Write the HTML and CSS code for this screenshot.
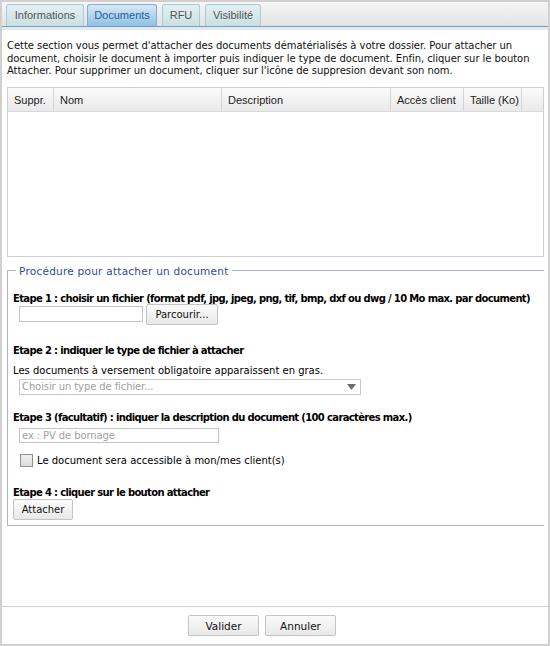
FILE: index.html
```html
<!DOCTYPE html>
<html lang="fr">
<head>
<meta charset="utf-8">
<link rel="stylesheet" href="styles.css">
</head>
<body>
<div class="window">
  <div class="tabbar">
    <div class="tab t-info">Informations</div>
    <div class="tab t-docs active">Documents</div>
    <div class="tab t-rfu">RFU</div>
    <div class="tab t-vis">Visibilité</div>
  </div>
  <div class="content">
    <p class="intro">Cette section vous permet d'attacher des documents dématérialisés à votre dossier. Pour attacher un document, choisir le document à importer puis indiquer le type de document. Enfin, cliquer sur le bouton Attacher. Pour supprimer un document, cliquer sur l'icône de suppresion devant son nom.</p>
    <div class="grid">
      <div class="grid-head">
        <div class="col c1">Suppr.</div>
        <div class="col c2">Nom</div>
        <div class="col c3">Description</div>
        <div class="col c4">Accès client</div>
        <div class="col c5">Taille (Ko)</div>
        <div class="col c6"></div>
      </div>
      <div class="grid-body"></div>
    </div>
    <fieldset class="proc">
      <legend>Procédure pour attacher un document</legend>
      <div class="step s1">Etape 1 : choisir un fichier (format pdf, jpg, jpeg, png, tif, bmp, dxf ou dwg / 10 Mo max. par document)</div>
      <div class="row file-row">
        <span class="field file-field"></span>
        <span class="btn browse">Parcourir...</span>
      </div>
      <div class="step s2">Etape 2 : indiquer le type de fichier à attacher</div>
      <div class="note">Les documents à versement obligatoire apparaissent en gras.</div>
      <div class="select">
        <span class="ph">Choisir un type de fichier...</span>
        <span class="arrow"><svg width="9" height="6" viewBox="0 0 9 6"><path d="M0 0H9L4.5 6Z" fill="#6b6b6b"/></svg></span>
      </div>
      <div class="step s3">Etape 3 (facultatif) : indiquer la description du document (100 caractères max.)</div>
      <div class="field desc"><span class="ph">ex : PV de bornage</span></div>
      <label class="check"><span class="box"></span>Le document sera accessible à mon/mes client(s)</label>
      <div class="step s4">Etape 4 : cliquer sur le bouton attacher</div>
      <span class="btn attach">Attacher</span>
    </fieldset>
  </div>
  <div class="footer">
    <span class="btn fbtn">Valider</span>
    <span class="btn fbtn">Annuler</span>
  </div>
</div>
</body>
</html>
```
FILE: styles.css
```css
* { box-sizing: border-box; }
html, body { margin: 0; padding: 0; background: #fff; }
body { font-family: "DejaVu Sans", Verdana, sans-serif; font-size: 10px; color: #000; }

.window {
  width: 550px;
  height: 646px;
  border: 2px solid #d0d0d0;
  display: flex;
  flex-direction: column;
}

.tabbar {
  height: 25px;
  background: linear-gradient(#f6f6f6, #e2e2e2);
  border-bottom: 1px solid #6a9fc8;
  display: flex;
  align-items: flex-end;
  padding-left: 4px;
  flex: none;
}
.tab {
  font-family: "Liberation Sans", Arial, sans-serif;
  font-size: 11px;
  color: #555;
  height: 22px;
  line-height: 21px;
  text-align: center;
  background: linear-gradient(#e4f0f2, #c9dfe3);
  border: 1px solid #a9cad8;
  border-bottom: none;
  border-radius: 3px 3px 0 0;
}
.t-info { width: 78px; }
.t-docs { width: 70px; margin-left: 3px; }
.t-rfu { width: 38px; margin-left: 5px; }
.t-vis { width: 56px; margin-left: 5px; }
.tab.active {
  color: #1b62a4;
  background: linear-gradient(#d6e9f6, #8fc0e2);
  border-color: #7fb0d4;
}

.content {
  flex: 1;
  padding: 1px 4px 0 5px;
  border-top: 3px solid #e8e8e8;
}
.intro {
  margin: 9px 0 9px 0;
  line-height: 12.5px;
  color: #111;
  letter-spacing: -0.05px;
}

.grid {
  border: 1px solid #cfcfcf;
  height: 170px;
}
.grid-head {
  display: flex;
  height: 24px;
  background: linear-gradient(#fbfbfb, #e9e9e9);
  border-bottom: 1px solid #d8d8d8;
  font-family: "Liberation Sans", Arial, sans-serif;
  font-size: 11px;
  color: #222;
}
.col {
  line-height: 24px;
  padding-left: 6px;
  border-right: 1px solid #d4d4d4;
}
.c1 { width: 46px; }
.c2 { width: 168px; }
.c3 { width: 169px; }
.c4 { width: 73px; }
.c5 { width: 58px; }
.c6 { flex: 1; border-right: none; }

.proc {
  margin: 8px 0 0 0;
  padding: 0 5px 5px 5px;
  border: none;
  border-top: 1px solid #aeb3c6;
  border-left: 1px solid #aeb3c6;
  border-bottom: 1px solid #aeb3c6;
  min-width: 0;
}
.proc legend {
  color: #2f4a9c;
  padding: 0 3px;
  margin-left: 3px;
  letter-spacing: 0.25px;
  font-size: 10.5px;
}

.step {
  font-weight: bold;
  margin-top: 15px;
  letter-spacing: -0.65px;
  line-height: 13px;
}
.step.s2 { margin-top: 19px; }
.step.s3 { margin-top: 16px; }
.step.s4 { margin-top: 19px; }

.row { display: flex; align-items: center; gap: 3px; }
.file-row { margin: -1px 0 0 6px; }
.field {
  border: 1px solid #c4c4c4;
  height: 16px;
  display: block;
}
.file-field { width: 124px; }

.btn {
  display: inline-flex;
  align-items: center;
  justify-content: center;
  height: 21px;
  border: 1px solid #c4c4c4;
  border-radius: 2px;
  background: linear-gradient(#fbfbfb, #e8e8e8);
  color: #111;
  font-size: 10px;
}
.browse { width: 72px; }

.note { margin-top: 7px; line-height: 13px; letter-spacing: 0; }
.select {
  margin: 2px 0 0 6px;
  width: 342px;
  height: 16px;
  border: 1px solid #c8c8c8;
  display: flex;
  align-items: center;
  justify-content: space-between;
  padding: 0 4px 0 2px;
}
.ph { color: #a0a0a0; letter-spacing: -0.1px; }
.arrow { display: flex; }

.desc {
  width: 200px;
  margin: 4px 0 0 6px;
  height: 15px;
  padding-left: 2px;
  line-height: 13px;
}

.check {
  display: flex;
  align-items: center;
  margin: 11px 0 0 7px;
  letter-spacing: 0;
}
.box {
  width: 13px;
  height: 13px;
  border: 1px solid #8f8f8f;
  background: linear-gradient(#f0f0f0, #dcdcdc);
  margin-right: 4px;
  flex: none;
}

.attach { width: 60px; margin-top: 0; }

.footer {
  flex: none;
  height: 38px;
  border-top: 1px solid #d0d0d0;
  display: flex;
  justify-content: center;
  align-items: flex-start;
  gap: 6px;
  padding-top: 8px;
  padding-right: 26px;
}
.fbtn { width: 71px; height: 21px; font-size: 10.5px; }
```
